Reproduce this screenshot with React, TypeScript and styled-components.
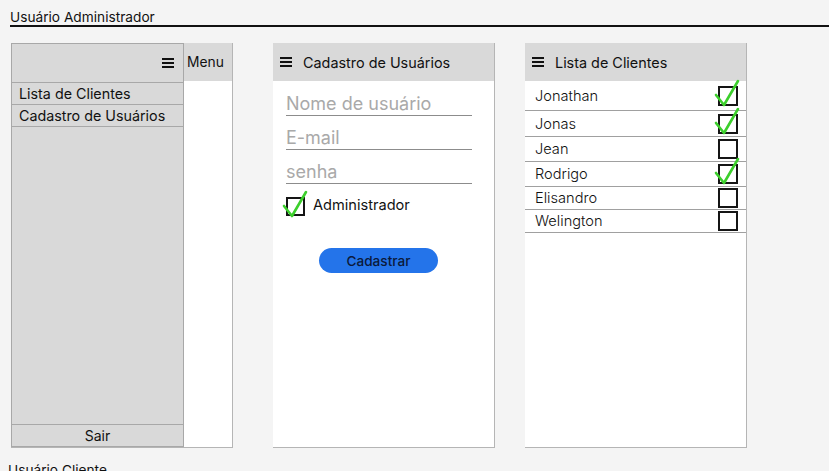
import React from "react";
import styled, { createGlobalStyle } from "styled-components";

const GlobalStyle = createGlobalStyle`
  body {
    margin: 0;
    background-color: #f4f4f4;
    font-family: "Inter", "Liberation Sans", sans-serif;
    color: #111;
  }
`;

const Page = styled.div`
  width: 829px;
  height: 471px;
  overflow: hidden;
`;

const Title = styled.div`
  margin-left: 10px;
  padding-top: 10px;
  font-size: 13.7px;
  line-height: 15px;
  border-bottom: 2px solid #111;
`;

const Boards = styled.div`
  display: flex;
  align-items: flex-start;
  margin-top: 16px;
  padding-left: 11px;
`;

const Panel = styled.div<{ $gap?: number }>`
  display: flex;
  flex-direction: column;
  width: 222px;
  height: 405px;
  margin-left: ${(p) => p.$gap ?? 0}px;
  background-color: #fff;
  border-right: 1px solid #b5b5b5;
  border-bottom: 1px solid #b5b5b5;
  box-sizing: border-box;
`;

const MenuPanel = styled(Panel)`
  flex-direction: row;
  background-color: transparent;
`;

const Sidebar = styled.div`
  display: flex;
  flex-direction: column;
  width: 173px;
  background-color: #d9d9d9;
  border: 1px solid #a8a8a8;
  box-sizing: border-box;
`;

const SideHead = styled.div`
  height: 38px;
  display: flex;
  align-items: center;
  justify-content: flex-end;
  padding-right: 9px;
  border-bottom: 1px solid #a8a8a8;
`;

const SideItem = styled.div`
  height: 21px;
  display: flex;
  align-items: center;
  padding-left: 7px;
  font-size: 14.3px;
  border-bottom: 1px solid #a8a8a8;
`;

const Spacer = styled.div`
  flex: 1;
`;

const SideFoot = styled.div`
  height: 21px;
  display: flex;
  align-items: center;
  justify-content: center;
  font-size: 14px;
  border-top: 1px solid #a8a8a8;
`;

const MenuCol = styled.div`
  flex: 1;
  display: flex;
  flex-direction: column;
  background-color: #fff;
`;

const MenuHead = styled.div`
  height: 38px;
  display: flex;
  align-items: center;
  padding-left: 3px;
  font-size: 13.8px;
  background-color: #d9d9d9;
`;

const Header = styled.div`
  height: 38px;
  flex-shrink: 0;
  display: flex;
  align-items: center;
  gap: 11px;
  padding-left: 7px;
  font-size: 14.4px;
  background-color: #d9d9d9;
`;

const Burger = styled.span`
  display: inline-flex;
  flex-direction: column;
  gap: 2.5px;
  width: 12px;

  & > i {
    display: block;
    height: 1.6px;
    background-color: #111;
  }
`;

const Form = styled.div`
  display: flex;
  flex-direction: column;
  padding: 12px 0 0 13px;
`;

const Field = styled.div`
  width: 186px;
  height: 22px;
  margin-bottom: 11px;
  font-size: 18px;
  line-height: 22px;
  color: #a9a9a9;
  border-bottom: 1px solid #8c8c8c;
`;

const CheckRow = styled.div`
  display: flex;
  align-items: center;
  gap: 8px;
  margin-top: 2px;
  font-size: 14.6px;
  line-height: 16px;

  & > span:last-child {
    margin-top: -3px;
  }
`;

const Box = styled.span<{ $size: number }>`
  position: relative;
  display: inline-block;
  width: ${(p) => p.$size}px;
  height: ${(p) => p.$size}px;
  border: 2px solid #151515;
  box-sizing: border-box;
  flex-shrink: 0;
`;

const Tick = styled.svg`
  position: absolute;
  left: -6px;
  top: -8px;
  width: 32px;
  height: 30px;
  overflow: visible;
`;

const Button = styled.button`
  align-self: flex-start;
  margin: 32px 0 0 33px;
  width: 119px;
  height: 25px;
  border: none;
  border-radius: 13px;
  background-color: #2474ea;
  color: #0b1a3b;
  font-family: "Inter", "Liberation Sans", sans-serif;
  font-size: 13.6px;
  font-weight: 500;
`;

const Row = styled.div<{ $h: number }>`
  height: ${(p) => p.$h}px;
  display: flex;
  align-items: center;
  justify-content: space-between;
  padding: 0 8px 0 10px;
  font-size: 14.6px;
  font-weight: 300;
  border-bottom: 1px solid #a0a0a0;
`;

const Footer = styled.div`
  margin: 14px 0 0 8px;
  font-size: 13.7px;
`;

const Hamburger = () => (
  <Burger>
    <i />
    <i />
    <i />
  </Burger>
);

const Check = ({ on, size }: { on: boolean; size: number }) => (
  <Box $size={size}>
    {on && (
      <Tick viewBox="0 0 32 30">
        <path
          d="M2 15 L10 25 L24 1"
          fill="none"
          stroke="#3ccf2c"
          strokeWidth="2.6"
          strokeLinecap="round"
          strokeLinejoin="round"
        />
      </Tick>
    )}
  </Box>
);

const clients = [
  { name: "Jonathan", on: true, h: 29 },
  { name: "Jonas", on: true, h: 25 },
  { name: "Jean", on: false, h: 24 },
  { name: "Rodrigo", on: true, h: 24 },
  { name: "Elisandro", on: false, h: 22 },
  { name: "Welington", on: false, h: 22 },
];

export default function App() {
  return (
    <Page>
      <GlobalStyle />
      <Title>Usuário Administrador</Title>

      <Boards>
        <MenuPanel>
          <Sidebar>
            <SideHead>
              <Hamburger />
            </SideHead>
            <SideItem>Lista de Clientes</SideItem>
            <SideItem>Cadastro de Usuários</SideItem>
            <Spacer />
            <SideFoot>Sair</SideFoot>
          </Sidebar>
          <MenuCol>
            <MenuHead>Menu</MenuHead>
          </MenuCol>
        </MenuPanel>

        <Panel $gap={40}>
          <Header>
            <Hamburger />
            Cadastro de Usuários
          </Header>
          <Form>
            <Field>Nome de usuário</Field>
            <Field>E-mail</Field>
            <Field>senha</Field>
            <CheckRow>
              <Check on size={19} />
              <span>Administrador</span>
            </CheckRow>
            <Button>Cadastrar</Button>
          </Form>
        </Panel>

        <Panel $gap={30}>
          <Header>
            <Hamburger />
            Lista de Clientes
          </Header>
          {clients.map((c) => (
            <Row key={c.name} $h={c.h}>
              {c.name}
              <Check on={c.on} size={20} />
            </Row>
          ))}
        </Panel>
      </Boards>

      <Footer>Usuário Cliente</Footer>
    </Page>
  );
}
